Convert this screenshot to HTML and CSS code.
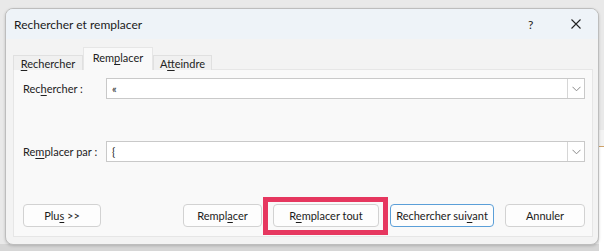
FILE: index.html
```html
<!DOCTYPE html>
<html lang="fr">
<head>
<meta charset="utf-8">
<title>Rechercher et remplacer</title>
<link rel="stylesheet" href="styles.css">
</head>
<body>
<div class="desktop">
  <div class="window">
    <div class="titlebar">
      <span class="title">Rechercher et remplacer</span>
      <span class="help">?</span>
      <span class="close">
        <svg width="10" height="10" viewBox="0 0 10 10"><path d="M0.5 0.5 L9.5 9.5 M9.5 0.5 L0.5 9.5" stroke="#222" stroke-width="1.1" fill="none"/></svg>
      </span>
    </div>
    <div class="body">
      <div class="tabs">
        <div class="tab first"><u>R</u>echercher</div>
        <div class="tab active">Rem<u>p</u>lacer</div>
        <div class="tab last">A<u>t</u>teindre</div>
      </div>
      <div class="panel">
        <div class="field">
          <label class="label">Rec<u>h</u>ercher :</label>
          <div class="combo">
            <span class="value">«</span>
            <span class="drop"><svg width="9" height="6" viewBox="0 0 9 6"><path d="M0.5 0.8 L4.5 4.8 L8.5 0.8" stroke="#8a8a8a" stroke-width="1" fill="none"/></svg></span>
          </div>
        </div>
        <div class="field second">
          <label class="label">Re<u>m</u>placer par :</label>
          <div class="combo">
            <span class="value">{</span>
            <span class="drop"><svg width="9" height="6" viewBox="0 0 9 6"><path d="M0.5 0.8 L4.5 4.8 L8.5 0.8" stroke="#8a8a8a" stroke-width="1" fill="none"/></svg></span>
          </div>
        </div>
        <div class="buttons">
          <button class="btn plus">Plu<u>s</u> &gt;&gt;</button>
          <div class="spacer"></div>
          <button class="btn replace">Rempl<u>a</u>cer</button>
          <span class="highlight"><button class="btn replace-all">R<u>e</u>mplacer tout</button></span>
          <button class="btn find-next">Rechercher sui<u>v</u>ant</button>
          <button class="btn cancel">Annuler</button>
        </div>
      </div>
    </div>
  </div>
  <div class="sheet-edge"></div>
</div>
</body>
</html>
```
FILE: styles.css
```css
* { box-sizing: border-box; }
html, body { margin: 0; padding: 0; }
body {
  width: 604px;
  height: 251px;
  overflow: hidden;
  background: #e8e8e8;
  font-family: "Lato", "Liberation Sans", sans-serif;
  font-size: 11px;
  color: #1b1b1b;
}
u { text-decoration: underline; text-underline-offset: 2px; }
.desktop {
  position: relative;
  width: 604px;
  height: 251px;
  padding: 8px 0 0 5px;
  background: linear-gradient(to bottom, #e9e9e9 0, #e9e9e9 244px, #d6d6d6 244px);
}
.window {
  width: 594px;
  height: 237px;
  border: 1px solid #bdbdbd;
  border-radius: 8px;
  background: #f3f3f3;
  overflow: hidden;
  box-shadow: 0 1px 3px rgba(0,0,0,0.18);
  display: flex;
  flex-direction: column;
  position: relative;
  z-index: 1;
}
.titlebar {
  height: 30px;
  background: #eef3f8;
  display: flex;
  align-items: center;
  padding: 0 0 0 8px;
  flex: none;
}
.title {
  flex: 1;
  font-size: 12px;
  color: #1a1a1a;
  padding-top: 1px;
  white-space: nowrap;
}
.help {
  width: 12px;
  font-size: 12px;
  margin-right: 31px;
  color: #222;
}
.close {
  width: 10px;
  height: 10px;
  margin-right: 17px;
  display: flex;
}
.body {
  flex: 1;
  padding: 8px 5px 7px 7px;
  display: flex;
  flex-direction: column;
}
.tabs {
  display: flex;
  height: 23px;
  align-items: flex-end;
  position: relative;
  z-index: 2;
  margin-bottom: -1px;
}
.tab {
  height: 15px;
  background: #f0f0f0;
  border: 1px solid #e0e0e0;
  border-bottom: none;
  font-size: 11px;
  line-height: 15px;
  color: #222;
  white-space: nowrap;
  text-align: center;
}
.tab.first { width: 70px; }
.tab.last { width: 59px; }
.tab.active {
  height: 23px;
  width: 70px;
  background: #f9f9f9;
  border-color: #e6e6e6;
  line-height: 20px;
}
.panel {
  flex: 1;
  background: #f9f9f9;
  border: 1px solid #e6e6e6;
  padding: 8px 7px 9px 8px;
  display: flex;
  flex-direction: column;
}
.field {
  display: flex;
  align-items: center;
  height: 21px;
}
.field.second { margin-top: 42px; }
.label {
  width: 84px;
  font-size: 11px;
  color: #222;
  padding-left: 1px;
  white-space: nowrap;
}
.combo {
  flex: 1;
  height: 21px;
  background: #fff;
  border: 1px solid #c9c9c9;
  display: flex;
  align-items: center;
}
.value {
  flex: 1;
  padding-left: 5px;
  font-size: 11px;
  color: #222;
}
.drop {
  width: 17px;
  height: 19px;
  border-left: 1px solid #d6d6d6;
  display: flex;
  align-items: center;
  justify-content: center;
}
.buttons {
  margin-top: auto;
  display: flex;
  gap: 11px;
  height: 23px;
}
.spacer { flex: 1; }
.btn {
  height: 23px;
  font-family: "Lato", "Liberation Sans", sans-serif;
  font-size: 11px;
  color: #1b1b1b;
  background: #fdfdfd;
  border: 1px solid #d2d2d2;
  border-radius: 4px;
  padding: 0;
  margin: 0;
  white-space: nowrap;
}
.plus { width: 78px; margin-left: 1px; }
.replace { width: 79px; }
.highlight {
  position: relative;
  display: flex;
}
.highlight::after {
  content: "";
  position: absolute;
  left: -10px;
  right: -9px;
  top: -7px;
  bottom: -8px;
  border: 5px solid #e6375f;
  pointer-events: none;
}
.replace-all { width: 106px; }
.find-next { width: 104px; border-color: #5b9fd8; }
.cancel { width: 80px; }
.sheet-edge {
  position: absolute;
  right: 0;
  top: 130px;
  width: 5px;
  height: 121px;
  background: linear-gradient(to bottom, #f3f3f3 0, #f3f3f3 16px, #cfa36a 16px, #cfa36a 17px, #ffffff 17px);
}
```
